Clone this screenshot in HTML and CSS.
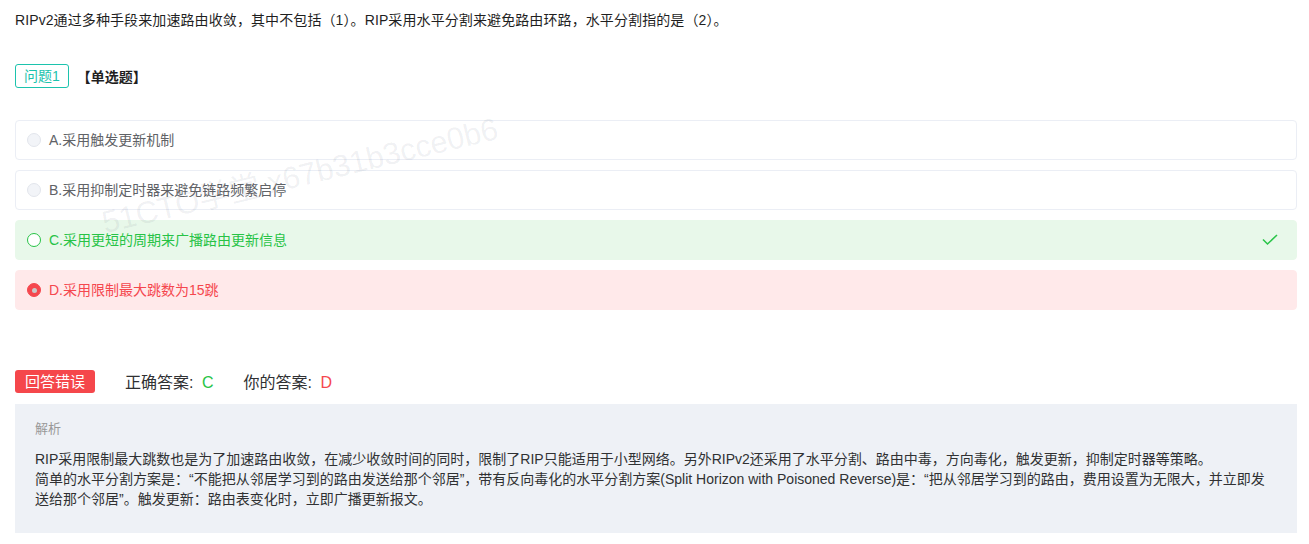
FILE: index.html
```html
<!DOCTYPE html>
<html>
<head>
    <title>试题解析</title>
    <link rel="stylesheet" href="styles.css">
</head>
<body>
    <div class="page">
        <div class="stem">RIPv2通过多种手段来加速路由收敛，其中不包括（1）。RIP采用水平分割来避免路由环路，水平分割指的是（2）。</div>

        <div class="q-head">
            <span class="q-tag">问题1</span>
            <span class="q-type">【单选题】</span>
        </div>

        <div class="options">
            <div class="option">
                <span class="radio"></span>
                <span class="option-text">A.采用触发更新机制</span>
            </div>
            <div class="option">
                <span class="radio"></span>
                <span class="option-text">B.采用抑制定时器来避免链路频繁启停</span>
            </div>
            <div class="option correct">
                <span class="radio"></span>
                <span class="option-text">C.采用更短的周期来广播路由更新信息</span>
                <svg class="check" width="16" height="12" viewBox="0 0 16 12">
                    <polyline points="1,5.5 5.5,10 15,1" fill="none" stroke="#2bc54a" stroke-width="1.6"/>
                </svg>
            </div>
            <div class="option wrong">
                <span class="radio"></span>
                <span class="option-text">D.采用限制最大跳数为15跳</span>
            </div>
            <div class="watermark">51CTO学堂 x67b31b3cce0b6</div>
        </div>

        <div class="result">
            <span class="result-badge">回答错误</span>
            <span class="result-item">正确答案: <em class="right-ans">C</em></span>
            <span class="result-item">你的答案: <em class="your-ans">D</em></span>
        </div>

        <div class="analysis">
            <div class="analysis-title">解析</div>
            <div class="analysis-body">
                RIP采用限制最大跳数也是为了加速路由收敛，在减少收敛时间的同时，限制了RIP只能适用于小型网络。另外RIPv2还采用了水平分割、路由中毒，方向毒化，触发更新，抑制定时器等策略。<br>
                简单的水平分割方案是：“不能把从邻居学习到的路由发送给那个邻居”，带有反向毒化的水平分割方案(Split Horizon with Poisoned Reverse)是：“把从邻居学习到的路由，费用设置为无限大，并立即发送给那个邻居”。触发更新：路由表变化时，立即广播更新报文。
            </div>
        </div>
    </div>
</body>
</html>
```

FILE: styles.css
```css
body {
    margin: 0;
    font-family: "Liberation Sans", Arial, "Noto Sans CJK SC", sans-serif;
    color: #303133;
    background: #fff;
}
.page {
    padding: 10px 12px 0 15px;
}
.stem {
    font-size: 14px;
    line-height: 20px;
    color: #1f1f1f;
    letter-spacing: 0.1px;
}
.q-head {
    display: flex;
    align-items: center;
    gap: 8px;
    margin-top: 34px;
    height: 24px;
}
.q-tag {
    box-sizing: border-box;
    height: 24px;
    line-height: 22px;
    padding: 0 8px;
    border: 1px solid #1cc3ad;
    border-radius: 3px;
    color: #1cc3ad;
    font-size: 14px;
}
.q-type {
    font-size: 14px;
    font-weight: bold;
    color: #1f1f1f;
}
.options {
    position: relative;
    margin-top: 32px;
    display: flex;
    flex-direction: column;
    gap: 10px;
}
.option {
    box-sizing: border-box;
    height: 40px;
    display: flex;
    align-items: center;
    gap: 8px;
    padding: 0 18px 2px 11px;
    border: 1px solid #ebeef5;
    border-radius: 4px;
    font-size: 14px;
    color: #606266;
}
.radio {
    box-sizing: border-box;
    width: 14px;
    height: 14px;
    margin-top: 2px;
    border-radius: 50%;
    border: 1px solid #e2e5ec;
    background: #f2f4f8;
    flex-shrink: 0;
}
.option-text {
    flex: 1;
}
.option.correct {
    background: #e8f8ea;
    border-color: #e8f8ea;
    color: #27c346;
}
.option.correct .radio {
    background: #fff;
    border: 1.5px solid #27c346;
}
.option.wrong {
    background: #ffe9ea;
    border-color: #ffe9ea;
    color: #f5474e;
}
.option.wrong .radio {
    background: #f5474e;
    border-color: #f5474e;
    display: flex;
    align-items: center;
    justify-content: center;
}
.option.wrong .radio::after {
    content: "";
    width: 5px;
    height: 5px;
    border-radius: 50%;
    background: #c9c9c9;
}
.check {
    flex-shrink: 0;
    margin-top: 2px;
}
.watermark {
    position: absolute;
    left: 92px;
    top: 77px;
    font-size: 31px;
    color: rgba(40, 50, 80, 0.07);
    transform: rotate(-13.5deg);
    transform-origin: left bottom;
    white-space: nowrap;
    pointer-events: none;
}
.result {
    display: flex;
    align-items: center;
    gap: 30px;
    margin-top: 59px;
    font-size: 16px;
    color: #303133;
}
.result-badge {
    width: 80px;
    height: 23px;
    line-height: 23px;
    text-align: center;
    background: #f5474b;
    color: #fff;
    border-radius: 3px;
    font-size: 15px;
}
.result-item em {
    font-style: normal;
    margin-left: 4px;
}
.right-ans {
    color: #27c346;
}
.your-ans {
    color: #f5474e;
}
.analysis {
    margin-top: 11px;
    background: #eef1f6;
    padding: 15px 20px 24px 20px;
}
.analysis-title {
    font-size: 13px;
    line-height: 20px;
    color: #999;
}
.analysis-body {
    margin-top: 10px;
    font-size: 14px;
    line-height: 20px;
    color: #303133;
}
```
